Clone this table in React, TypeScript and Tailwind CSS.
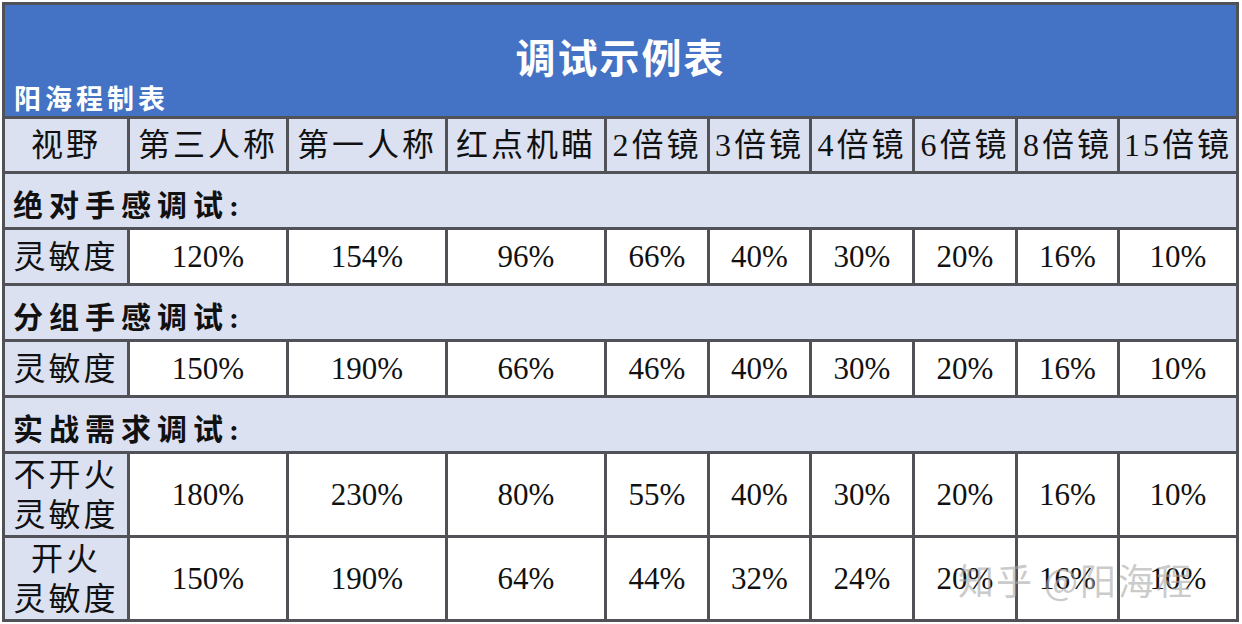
const cols = ['视野', '第三人称', '第一人称', '红点机瞄', '2倍镜', '3倍镜', '4倍镜', '6倍镜', '8倍镜', '15倍镜'];

type Row = { label: string[]; values: string[]; tall?: boolean };
type Section = { title: string; rows: Row[] };

const sections: Section[] = [
  {
    title: '绝对手感调试:',
    rows: [{ label: ['灵敏度'], values: ['120%', '154%', '96%', '66%', '40%', '30%', '20%', '16%', '10%'] }],
  },
  {
    title: '分组手感调试:',
    rows: [{ label: ['灵敏度'], values: ['150%', '190%', '66%', '46%', '40%', '30%', '20%', '16%', '10%'] }],
  },
  {
    title: '实战需求调试:',
    rows: [
      { label: ['不开火', '灵敏度'], values: ['180%', '230%', '80%', '55%', '40%', '30%', '20%', '16%', '10%'], tall: true },
      { label: ['开火', '灵敏度'], values: ['150%', '190%', '64%', '44%', '32%', '24%', '20%', '16%', '10%'], tall: true },
    ],
  },
];

const font = { fontFamily: '"Liberation Serif", "Noto Sans CJK SC", serif' };

export default function App() {
  return (
    <div className="relative w-[1242px] h-[624px] bg-white overflow-hidden">
      <div
        className="ml-[2px] mt-[2px] w-[1237px] p-[3px] bg-[#505257] grid gap-[3px] grid-cols-[122px_156px_156px_156px_100px_99px_100px_100px_99px_116px] text-[#111]"
        style={font}
      >
        {/* Title */}
        <div className="col-span-10 h-[111px] bg-[#4472c4] relative flex flex-col">
          <div className="h-[105px] flex items-center justify-center pb-[4px]">
            <span
              className="text-white text-[40px] font-bold tracking-[2px]"
              style={{ fontFamily: '"Noto Sans CJK SC", sans-serif' }}
            >
              调试示例表
            </span>
          </div>
          <span
            className="absolute left-[9px] bottom-[5px] text-white text-[27px] font-bold leading-none tracking-[4px]"
            style={{ fontFamily: '"Noto Sans CJK SC", serif' }}
          >
            阳海程制表
          </span>
        </div>

        {/* Header */}
        {cols.map((c) => (
          <div
            key={c}
            className="h-[52px] bg-[#dbe1f1] flex items-center justify-center text-[32px] tracking-[3px] whitespace-nowrap leading-none"
          >
            {c}
          </div>
        ))}

        {sections.map((s) => (
          <>
            <div
              key={s.title}
              className="col-span-10 h-[53px] bg-[#dbe1f1] flex items-end pb-[6px] pl-[8px] text-[30px] tracking-[6px] leading-none font-bold"
            >
              {s.title}
            </div>
            {s.rows.map((r, ri) => (
              <>
                <div
                  key={s.title + ri}
                  className={`${r.tall ? 'h-[81px]' : 'h-[53px]'} bg-[#dbe1f1] flex flex-col items-center justify-center text-[32px] tracking-[3px] leading-[40px]`}
                >
                  {r.label.map((l) => (
                    <span key={l}>{l}</span>
                  ))}
                </div>
                {r.values.map((v, vi) => (
                  <div
                    key={s.title + ri + '-' + vi}
                    className="bg-white flex items-center justify-center text-[31px] leading-none"
                  >
                    {v}
                  </div>
                ))}
              </>
            ))}
          </>
        ))}
      </div>

      {/* Watermark */}
      <div
        className="absolute left-[958px] top-[552px] text-[36px] text-[#a8a8a8]/60 tracking-[2px] whitespace-nowrap"
        style={{ fontFamily: '"Noto Sans CJK SC", sans-serif' }}
      >
        知乎 @阳海程
      </div>
    </div>
  );
}
